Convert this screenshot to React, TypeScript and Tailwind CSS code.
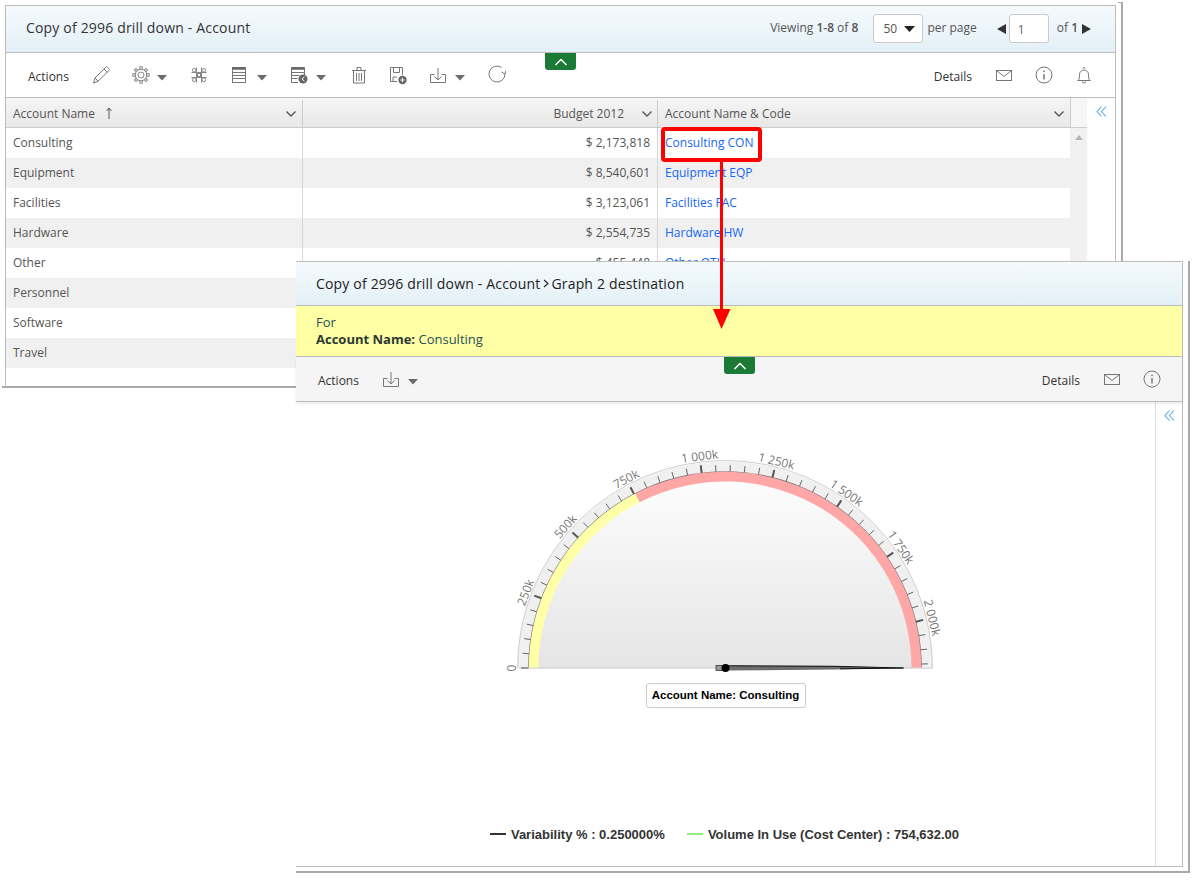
import { Fragment } from "react";

const ROWS = [
  { name: "Consulting", budget: "$ 2,173,818", link: "Consulting CON" },
  { name: "Equipment", budget: "$ 8,540,601", link: "Equipment EQP" },
  { name: "Facilities", budget: "$ 3,123,061", link: "Facilities FAC" },
  { name: "Hardware", budget: "$ 2,554,735", link: "Hardware HW" },
  { name: "Other", budget: "$ 455,448", link: "Other OTH" },
  { name: "Personnel", budget: "", link: "" },
  { name: "Software", budget: "", link: "" },
  { name: "Travel", budget: "", link: "" },
];

const LEGEND_FONT = "font-['Liberation_Sans',sans-serif]";

function Caret({ className = "" }: { className?: string }) {
  return (
    <svg width="10" height="6" viewBox="0 0 10 6" className={`mt-[6px] ${className}`}>
      <path d="M0 0h10L5 5.5z" fill="#6b6b6b" />
    </svg>
  );
}

function Icon({ w, h = 20, className = "", children }: { w: number; h?: number; className?: string; children: React.ReactNode }) {
  return (
    <svg width={w} height={h} viewBox={`0 0 ${w} ${h}`} fill="none" stroke="#777" strokeWidth="1" className={`shrink-0 ${className}`}>
      {children}
    </svg>
  );
}

function Pencil({ className }: { className?: string }) {
  return (
    <Icon w={20} className={className}>
      <path d="M2.5 18l1.5-5L14.5 2.5a1.5 1.5 0 0 1 2.2 0l1 1a1.5 1.5 0 0 1 0 2.2L7.2 16.2z M13 4l3.5 3.5 M4 13l3.2 3.2" />
    </Icon>
  );
}

function Gear({ className }: { className?: string }) {
  const teeth = [0, 45, 90, 135, 180, 225, 270, 315];
  return (
    <Icon w={18} className={className}>
      <g stroke="#888">
        <circle cx="9" cy="10" r="3" />
        <circle cx="9" cy="10" r="5.8" />
        {teeth.map((a) => (
          <rect key={a} x="7.8" y="1.8" width="2.4" height="2.4" fill="#fff" transform={`rotate(${a} 9 10)`} />
        ))}
      </g>
    </Icon>
  );
}

function Nodes({ className }: { className?: string }) {
  return (
    <Icon w={18} className={className}>
      <g stroke="#888">
        <path d="M6.5 2.5v15 M11.5 2.5v15 M1.500 7.500h15 M1.500 12.500h15" />
        <circle cx="4.200" cy="5.200" r="1.800" />
        <circle cx="13.800" cy="5.200" r="1.800" />
        <circle cx="4.200" cy="14.800" r="1.800" />
        <circle cx="13.800" cy="14.800" r="1.800" />
        <rect x="7.500" y="8.500" width="3" height="3" fill="#fff" />
      </g>
    </Icon>
  );
}

function TableIcon({ className }: { className?: string }) {
  return (
    <Icon w={16} className={className}>
      <rect x="1.5" y="2.5" width="13" height="15" />
      <path d="M1.5 3.5h13" stroke="#666" strokeWidth="2.5" />
      <path d="M1.5 7.5h13 M1.5 10.5h13 M1.5 13.5h13" />
    </Icon>
  );
}

function TableBack({ className }: { className?: string }) {
  return (
    <Icon w={18} className={className}>
      <path d="M8 17.5H1.5v-15h13V10" />
      <path d="M1.5 3.5h13" stroke="#666" strokeWidth="2.5" />
      <path d="M1.5 7.5h13 M1.5 10.5h8 M1.5 13.5h6" />
      <circle cx="13" cy="14" r="4.5" fill="#666" stroke="none" />
      <path d="M14.5 11.8L12 14l2.5 2.2" stroke="#fff" />
    </Icon>
  );
}

function Trash({ className }: { className?: string }) {
  return (
    <Icon w={16} className={className}>
      <path d="M1 5.5h14 M6 5V2.5h4V5 M2.5 5.5v12.5h11V5.5 M5.5 8v8 M8 8v8 M10.5 8v8" />
    </Icon>
  );
}

function SavePlus({ className }: { className?: string }) {
  return (
    <Icon w={18} className={className}>
      <path d="M8 16.5H1.5v-14h12V10" />
      <path d="M4.5 2.5v5h6v-5 M4 16v-4h4" />
      <circle cx="13.5" cy="15" r="4.2" fill="#666" stroke="none" />
      <path d="M13.5 12.8v4.4 M11.3 15h4.4" stroke="#fff" />
    </Icon>
  );
}

function Download({ className }: { className?: string }) {
  return (
    <Icon w={18} className={className}>
      <path d="M5.5 9.5h-4v8h15v-8h-4" />
      <path d="M9 3v12 M5.5 11.5L9 15l3.5-3.5" />
    </Icon>
  );
}

function Refresh({ className }: { className?: string }) {
  return (
    <Icon w={18} className={className}>
      <path d="M13.500 2.400A8 8 0 1 0 17 9" />
      <path d="M13.500 7l3.500 2 1-3.500" />
    </Icon>
  );
}

function Mail({ className }: { className?: string }) {
  return (
    <Icon w={18} className={className}>
      <rect x="1.5" y="5.5" width="15" height="10" />
      <path d="M1.5 5.5L9 11.5l7.5-6" />
    </Icon>
  );
}

function Info({ className }: { className?: string }) {
  return (
    <Icon w={18} className={className}>
      <circle cx="9" cy="10" r="8" />
      <path d="M9 9v5.5" strokeWidth="1.5" />
      <circle cx="9" cy="6.3" r="0.9" fill="#777" stroke="none" />
    </Icon>
  );
}

function Bell({ className }: { className?: string }) {
  return (
    <Icon w={16} className={className}>
      <path d="M2 15.5c1.5-1.5 1.5-3 1.5-6a4.5 4.5 0 0 1 9 0c0 3 0 4.500 1.500 6z M1.500 15.500h13" />
      <path d="M7 3.500a1 1 0 0 1 2 0 M6.500 16.500a1.500 1.500 0 0 0 3 0" />
    </Icon>
  );
}

function Chevron({ className = "" }: { className?: string }) {
  return (
    <svg width="12" height="8" viewBox="0 0 12 8" fill="none" stroke="#555" strokeWidth="1.4" className={className}>
      <path d="M1.500 1.500L6 6l4.500-4.500" />
    </svg>
  );
}

function DoubleLeft({ className = "" }: { className?: string }) {
  return (
    <svg width="11" height="11" viewBox="0 0 11 11" fill="none" stroke="#5aa9e6" strokeWidth="1.100" className={className}>
      <path d="M5.500 0.500L1 5.500l4.500 5 M10 0.500L5.500 5.500l4.500 5" />
    </svg>
  );
}

function GreenTab({ className = "" }: { className?: string }) {
  return (
    <div className={`absolute w-[31px] h-[17px] bg-[#1b7a35] rounded-b-[3px] flex items-center justify-center ${className}`}>
      <svg width="14" height="8" viewBox="0 0 14 8" fill="none" stroke="#fff" strokeWidth="1.500">
        <path d="M1.500 7L7 1.500 12.500 7" />
      </svg>
    </div>
  );
}

// highcharts style gauge, 0 sits on the left of the baseline
const CX = 225;
const CY = 228;
const MAX = 2164;
const angle = (v: number) => (v / MAX) * 180;
const pt = (r: number, a: number) => {
  const t = (a * Math.PI) / 180;
  return [CX - r * Math.cos(t), CY - r * Math.sin(t)];
};
const ring = (r1: number, r2: number, a1: number, a2: number) => {
  const [x1, y1] = pt(r1, a1);
  const [x2, y2] = pt(r1, a2);
  const [x3, y3] = pt(r2, a2);
  const [x4, y4] = pt(r2, a1);
  return `M${x1} ${y1}A${r1} ${r1} 0 0 1 ${x2} ${y2}L${x3} ${y3}A${r2} ${r2} 0 0 0 ${x4} ${y4}Z`;
};

const LABELS = ["0", "250k", "500k", "750k", "1 000k", "1 250k", "1 500k", "1 750k", "2 000k"];
const BOUNDARY = 754.632;

function Gauge() {
  const ticks: number[] = [];
  for (let v = 0; v <= MAX; v += 50) ticks.push(v);
  return (
    <svg width="451" height="240" viewBox="0 0 451 240" className="block mx-auto shrink-0">
      <defs>
        <linearGradient id="face" x1="0" y1="0" x2="0" y2="1">
          <stop offset="0" stopColor="#ffffff" />
          <stop offset="1" stopColor="#e5e5e5" />
        </linearGradient>
      </defs>
      <path d={ring(207.5, 0, 0, 180)} fill="url(#face)" stroke="#cfcfcf" strokeWidth="1" />
      <path d={ring(206.5, 196.500, 0, 180)} fill="#f0f0f0" />
      <path d={ring(196.500, 186.500, 0, angle(BOUNDARY))} fill="#ffffa8" />
      <path d={ring(196.500, 186.500, angle(BOUNDARY), 180)} fill="#ffa6a6" />
      <path d={ring(196.800, 196.200, 0, 180)} fill="#777" />
      {ticks.map((v) => {
        const major = v % 250 === 0;
        const [x1, y1] = pt(196.500, angle(v));
        const [x2, y2] = pt(major ? 204 : 203, angle(v));
        return <line key={v} x1={x1} y1={y1} x2={x2} y2={y2} stroke={major ? "#555" : "#666"} strokeWidth={major ? 2 : 1} />;
      })}
      {LABELS.map((label, i) => {
        const a = angle(i * 250);
        const [x, y] = pt(209, a);
        return (
          <text
            key={label}
            x={x}
            y={y}
            fill="#777"
            fontSize="12"
            fontFamily="'Open Sans', sans-serif"
            textAnchor="middle"
            transform={`rotate(${a - 90} ${x} ${y})`}
          >
            {label}
          </text>
        );
      })}
      <line x1="18" y1={CY} x2="433" y2={CY} stroke="#dcdcdc" strokeWidth="1" />
      <rect x="216" y="225.500" width="10" height="5" fill="#999" stroke="#333" strokeWidth="0.800" />
      <path d={`M225 225.500L335 226L403.500 ${CY}L335 229.500L225 230.500Z`} fill="#6e6e6e" />
      <path d={`M225 225.800L335 226.300L403.500 ${CY}`} fill="none" stroke="#111" strokeWidth="1" />
      <path d={`M340 228.800L403.500 ${CY}`} fill="none" stroke="#111" strokeWidth="1" />
      <circle cx="225.500" cy={CY} r="4" fill="#000" />
    </svg>
  );
}

function DrillWindow() {
  return (
    <div className="absolute left-[296px] top-[261px] z-10 w-[894px] h-[612px] bg-white border-r-2 border-b-2 border-[#aaa]">
      <div className="w-[887px] h-[606px] flex flex-col border border-l-0 border-[#bdbdbd] text-[#333]">
        <div className="h-[44px] shrink-0 flex items-center pl-[20px] text-[14px] tracking-[0.18px] text-[#222] bg-gradient-to-b from-[#f5fafc] to-[#e3f0f7] border-b border-[#bdbdbd]">
          <span>Copy of 2996 drill down - Account</span>
          <svg width="6" height="9" viewBox="0 0 6 9" fill="none" stroke="#222" strokeWidth="1.100" className="ml-[3px] mr-[2px]">
            <path d="M1 1l4 3.500-4 3.500" />
          </svg>
          <span>Graph 2 destination</span>
        </div>
        <div className="h-[51px] shrink-0 flex flex-col justify-center pl-[20px] text-[13px] leading-[17px] text-[#26505a] bg-[#ffffa5] border-b border-[#bdbdbd]">
          <div>For</div>
          <div>
            <b className="font-bold text-[#2b3a33]">Account Name:</b> Consulting
          </div>
        </div>
        <div className="relative h-[45px] shrink-0 flex items-center pl-[22px] pr-[21px] text-[12px] bg-[#f5f5f5] border-b border-[#bdbdbd] shadow-[0_2px_3px_rgba(0,0,0,0.08)]">
          <span className="mt-[3px]">Actions</span>
          <Download className="ml-[23px]" />
          <Caret className="ml-[8px]" />
          <span className="ml-auto mt-[3px]">Details</span>
          <Mail className="ml-[23px]" />
          <Info className="ml-[22px]" />
          <GreenTab className="left-[428px] top-0" />
        </div>
        <div className="flex-1 flex min-h-0">
          <div className="flex-1 flex flex-col pt-[38px] pb-[22px]">
            <Gauge />
            <div className={`self-center mt-[3px] h-[25px] w-[160px] flex items-center justify-center bg-white border border-[#ccc] rounded-[3px] text-[11.500px] font-bold text-black ${LEGEND_FONT}`}>
              Account Name: Consulting
            </div>
            <div className={`mt-auto flex items-center justify-center pr-[2px] text-[13px] font-bold text-[#333] ${LEGEND_FONT}`}>
              <span className="w-[16px] h-[2px] bg-[#333] mr-[5px]" />
              <span>Variability % : 0.250000%</span>
              <span className="w-[16px] h-[2px] bg-[#90ed7d] ml-[22px] mr-[5px]" />
              <span>Volume In Use (Cost Center) : 754,632.00</span>
            </div>
          </div>
          <div className="w-[27px] shrink-0 border-l border-[#ddd] flex justify-center pt-[8px]">
            <DoubleLeft />
          </div>
        </div>
      </div>
    </div>
  );
}

export default function App() {
  return (
    <div className="relative h-[884px] w-[1202px] overflow-hidden bg-white font-['Open_Sans',sans-serif] text-[12px] text-[#555]">
      {/* back window frame lines */}
      <div className="absolute left-[2px] top-[2px] w-[1121px] h-[386px] border-r-2 border-b-2 border-[#aaa]" />
      <div className="absolute left-[1118px] top-[2px] w-[3px] h-[1px] bg-[#aaa]" />

      <div className="relative ml-[5px] mt-[5px] inline-block align-top w-[1111px] h-[381px] bg-white border border-[#bdbdbd] border-b-0">
        <div className="h-[47px] flex items-center pl-[20px] pr-[24px] bg-gradient-to-b from-[#f5fafc] to-[#e3f0f7] border-b border-[#bdbdbd]">
          <span className="text-[14px] tracking-[0.18px] text-[#333] mb-[3px]">Copy of 2996 drill down - Account</span>
          <span className="ml-auto text-[#555] mb-[2px]">
            Viewing <b className="font-semibold">1-8</b> of <b className="font-semibold">8</b>
          </span>
          <div className="ml-[15px] w-[50px] h-[29px] mb-[1px] flex items-center justify-between pl-[9px] pr-[7px] bg-white border border-[#ccc] rounded-[3px]">
            <span>50</span>
            <svg width="11" height="6" viewBox="0 0 11 6">
              <path d="M0 0h11L5.500 6z" fill="#222" />
            </svg>
          </div>
          <span className="ml-[4px] mb-[2px]">per page</span>
          <svg width="9" height="10" viewBox="0 0 9 10" className="ml-[20px] mb-[1px]">
            <path d="M9 0v10L0 5z" fill="#333" />
          </svg>
          <div className="ml-[3px] w-[40px] h-[29px] mb-[1px] flex items-center pl-[8px] pt-[3px] bg-white border border-[#ccc] rounded-[3px] text-[#666]">1</div>
          <span className="ml-[8px] mb-[2px]">
            of <b className="font-semibold">1</b>
          </span>
          <svg width="9" height="10" viewBox="0 0 9 10" className="ml-[4px] mb-[1px]">
            <path d="M0 0v10l9-5z" fill="#333" />
          </svg>
        </div>
        <div className="relative h-[45px] flex items-center pl-[22px] pr-[23px] border-b border-[#bdbdbd]">
          <span className="text-[#333] mt-[3px]">Actions</span>
          <Pencil className="ml-[22px]" />
          <Gear className="ml-[21px]" />
          <Caret className="ml-[7px]" />
          <Nodes className="ml-[23px]" />
          <TableIcon className="ml-[23px]" />
          <Caret className="ml-[10px]" />
          <TableBack className="ml-[23px]" />
          <Caret className="ml-[8px]" />
          <Trash className="ml-[25px]" />
          <SavePlus className="ml-[22px]" />
          <Download className="ml-[22px]" />
          <Caret className="ml-[8px]" />
          <Refresh className="ml-[23px]" />
          <span className="ml-auto text-[#333] mt-[3px]">Details</span>
          <Mail className="ml-[23px]" />
          <Info className="ml-[22px]" />
          <Bell className="ml-[23px]" />
          <GreenTab className="left-[539px] top-0" />
        </div>
        <div className="flex">
          <div className="w-[1064px] shrink-0">
            <div className="grid grid-cols-[296px_355px_413px] h-[30px] pt-[2px] bg-gradient-to-b from-[#f6f6f6] to-[#e9e7e7] border-b border-[#ccc]">
              <div className="flex items-center pl-[7px] pr-[5px]">
                Account Name
                <svg width="8" height="12" viewBox="0 0 8 12" fill="none" stroke="#555" className="ml-[10px] mb-[2px]">
                  <path d="M4 12V1.500 M1.500 4L4 1l2.500 3" />
                </svg>
                <Chevron className="ml-auto" />
              </div>
              <div className="flex items-center justify-end pr-[4px] border-l border-[#ccc]">
                Budget 2012
                <Chevron className="ml-[17px]" />
              </div>
              <div className="flex items-center pl-[7px] pr-[5px] border-l border-[#ccc]">
                Account Name &amp; Code
                <Chevron className="ml-auto" />
              </div>
            </div>
            {ROWS.map((r, i) => (
              <Fragment key={r.name}>
                <div className={`grid grid-cols-[296px_355px_413px] h-[30px] items-stretch ${i % 2 ? "bg-[#f0f0f0]" : "bg-white"}`}>
                  <div className="flex items-center pl-[7px]">{r.name}</div>
                  <div className="flex items-center justify-end pr-[7px] border-l border-[#d6d6d6]">{r.budget}</div>
                  <div className="flex items-center pl-[7px] border-l border-[#d6d6d6] text-[#1668f5]">{r.link}</div>
                </div>
              </Fragment>
            ))}
          </div>
          <div className="w-[17px] shrink-0 bg-[#f1f1f1] flex flex-col items-center">
            <div className="h-[30px] w-full shrink-0 bg-[#f6f6f6] border-l border-b border-[#ccc]" />
            <svg width="8" height="5" viewBox="0 0 8 5" className="mt-[7px]">
              <path d="M0 5h8L4 0z" fill="#b5b5b5" />
            </svg>
          </div>
          <div className="flex-1 flex justify-center pt-[8px]">
            <DoubleLeft />
          </div>
        </div>
      </div>

      <DrillWindow />

      {/* red callout */}
      <div className="absolute z-20 left-[661px] top-[127px] w-[101px] h-[35px] border-[4px] border-[#ff0000] rounded-[4px]" />
      <svg width="20" height="170" viewBox="0 0 20 170" className="absolute z-20 left-[712px] top-[160px]">
        <path d="M9.500 0v152" stroke="#ff0000" strokeWidth="3" fill="none" />
        <path d="M1 149h17.500L9.500 169z" fill="#ff0000" />
      </svg>
    </div>
  );
}
